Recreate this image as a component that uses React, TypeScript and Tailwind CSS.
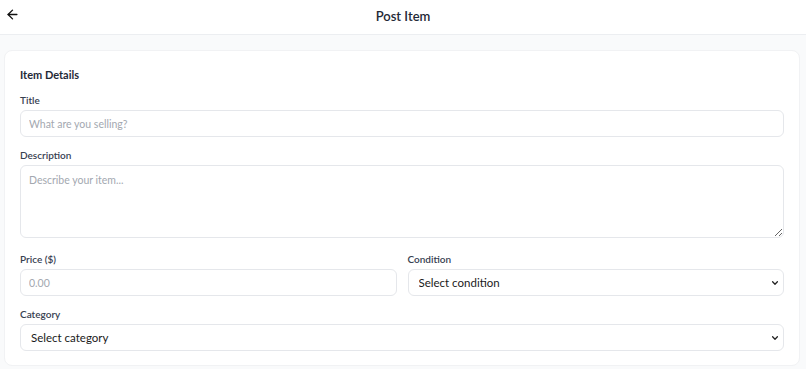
import React from "react";
import { ArrowLeft } from "lucide-react";

function Chevron() {
  return (
    <svg width="8" height="8" viewBox="0 0 10 10" className="pointer-events-none absolute right-[5px] top-1/2 -translate-y-1/2">
      <path d="M2 3.5 L5 6.5 L8 3.5" fill="none" stroke="#222" strokeWidth="1.6" strokeLinecap="round" strokeLinejoin="round" />
    </svg>
  );
}

export default function App() {
  const font = { fontFamily: "Lato, 'Noto Sans', sans-serif" };
  return (
    <div className="min-h-[369px] bg-[#f9fafb] text-[#111827]" style={font}>
      <header className="relative flex h-[35px] items-center justify-center border-b border-[#eceef1] bg-white pb-[3px]">
        <button className="absolute left-[4px] top-[6px] flex h-[16px] w-[16px] items-center justify-center text-[#111]">
          <ArrowLeft size={15} strokeWidth={2.2} />
        </button>
        <h1 className="text-[13px] font-semibold leading-[16px] text-[#1f2937]">Post Item</h1>
      </header>
      <main className="pl-1 pr-1.5 pt-[15px]">
        <section className="rounded-lg border border-[#f1f2f4] bg-white px-[15px] pb-[14px] pt-[15px]">
          <h2 className="mb-[8px] text-[11px] font-bold leading-[18px] text-[#1f2937]">Item Details</h2>
          <div className="flex flex-col gap-[10px]">
            <div>
              <label className="mb-[2px] block text-[10px] font-semibold leading-[16px] text-[#374151]">Title</label>
              <input
                placeholder="What are you selling?"
                className="block h-[27px] w-full rounded-md border border-[#e5e7eb] bg-white px-[8px] text-[10.5px] text-[#111] outline-none placeholder:text-[#a3a8b0]"
              />
            </div>
            <div>
              <label className="mb-[2px] block text-[10px] font-semibold leading-[16px] text-[#374151]">Description</label>
              <textarea
                placeholder="Describe your item..."
                className="block h-[73px] w-full rounded-md border border-[#e5e7eb] bg-white px-[8px] py-[6px] text-[10.5px] leading-[16px] text-[#111] outline-none placeholder:text-[#a3a8b0]"
              />
            </div>
            <div className="mt-[3px] grid grid-cols-2 gap-[11px]">
              <div>
                <label className="mb-[2px] block text-[10px] font-semibold leading-[16px] text-[#374151]">Price ($)</label>
                <input
                  placeholder="0.00"
                  className="block h-[27px] w-full rounded-md border border-[#e5e7eb] bg-white px-[8px] text-[10.5px] text-[#111] outline-none placeholder:text-[#a3a8b0]"
                />
              </div>
              <div>
                <label className="mb-[2px] block text-[10px] font-semibold leading-[16px] text-[#374151]">Condition</label>
                <div className="relative">
                  <select className="block h-[27px] w-full appearance-none rounded-md border border-[#e5e7eb] bg-white px-[10px] text-[11.5px] text-[#1a1a1a] outline-none">
                    <option>Select condition</option>
                  </select>
                  <Chevron />
                </div>
              </div>
            </div>
            <div>
              <label className="mb-[2px] block text-[10px] font-semibold leading-[16px] text-[#374151]">Category</label>
              <div className="relative">
                <select className="block h-[27px] w-full appearance-none rounded-md border border-[#e5e7eb] bg-white px-[10px] text-[11.5px] text-[#1a1a1a] outline-none">
                  <option>Select category</option>
                </select>
                <Chevron />
              </div>
            </div>
          </div>
        </section>
      </main>
    </div>
  );
}
